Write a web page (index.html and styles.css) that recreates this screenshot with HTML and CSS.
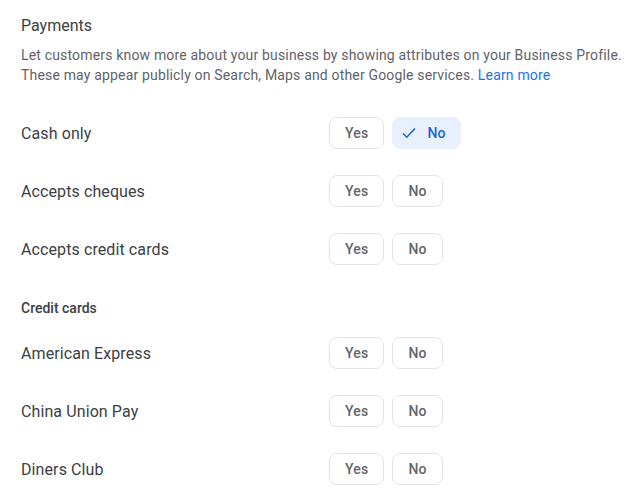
FILE: index.html
```html
<!DOCTYPE html>
<html lang="en">
<head>
    <meta charset="UTF-8">
    <title>Payments</title>
    <link rel="stylesheet" href="styles.css">
</head>
<body>
    <section class="attributes">
        <h2 class="section-title">Payments</h2>
        <p class="section-desc">Let customers know more about your business by showing attributes on your Business Profile. These may appear publicly on Search, Maps and other Google services. <a href="#">Learn more</a></p>

        <div class="attr-list">
            <div class="attr-row">
                <span class="attr-label">Cash only</span>
                <div class="choice">
                    <button class="choice-btn">Yes</button>
                    <button class="choice-btn selected">
                        <svg width="14" height="12" viewBox="0 0 14 12"><polyline points="1,6.5 4.8,10.2 13,1.5" fill="none" stroke="currentColor" stroke-width="1.6"/></svg>
                        No
                    </button>
                </div>
            </div>
            <div class="attr-row">
                <span class="attr-label">Accepts cheques</span>
                <div class="choice">
                    <button class="choice-btn">Yes</button>
                    <button class="choice-btn">No</button>
                </div>
            </div>
            <div class="attr-row">
                <span class="attr-label">Accepts credit cards</span>
                <div class="choice">
                    <button class="choice-btn">Yes</button>
                    <button class="choice-btn">No</button>
                </div>
            </div>
        </div>

        <h3 class="group-title">Credit cards</h3>

        <div class="attr-list">
            <div class="attr-row">
                <span class="attr-label">American Express</span>
                <div class="choice">
                    <button class="choice-btn">Yes</button>
                    <button class="choice-btn">No</button>
                </div>
            </div>
            <div class="attr-row">
                <span class="attr-label">China Union Pay</span>
                <div class="choice">
                    <button class="choice-btn">Yes</button>
                    <button class="choice-btn">No</button>
                </div>
            </div>
            <div class="attr-row">
                <span class="attr-label">Diners Club</span>
                <div class="choice">
                    <button class="choice-btn">Yes</button>
                    <button class="choice-btn">No</button>
                </div>
            </div>
        </div>
    </section>
</body>
</html>
```

FILE: styles.css
```css
body {
    margin: 0;
    font-family: Roboto, "Liberation Sans", Arial, sans-serif;
    background-color: #fff;
    color: #3c4043;
}
.attributes {
    padding: 14px 12px 0 21px;
}
.section-title {
    margin: 0;
    font-size: 16px;
    font-weight: 400;
    line-height: 24px;
    color: #3c4043;
}
.section-desc {
    margin: 7px 0 0;
    font-size: 14px;
    line-height: 20px;
    letter-spacing: 0.17px;
    color: #5f6368;
}
.section-desc a {
    color: #1a73e8;
    text-decoration: none;
}
.attr-list {
    display: flex;
    flex-direction: column;
    gap: 26px;
    margin-top: 32px;
}
.group-title + .attr-list {
    margin-top: 19px;
}
.attr-row {
    display: flex;
    align-items: center;
    height: 32px;
}
.attr-label {
    width: 308px;
    font-size: 16px;
    letter-spacing: 0.1px;
    color: #3c4043;
}
.choice {
    display: flex;
    gap: 8px;
}
.choice-btn {
    display: flex;
    align-items: center;
    height: 32px;
    padding: 0 15px;
    border: 1px solid #e3e3e3;
    border-radius: 8px;
    background-color: #fff;
    font-family: inherit;
    font-size: 14px;
    font-weight: 500;
    letter-spacing: 0.2px;
    color: #63666a;
    cursor: pointer;
}
.choice-btn.selected {
    padding: 0 14px 0 9px;
    border-color: #e8f0fe;
    background-color: #e8f0fe;
    color: #1967d2;
}
.choice-btn svg {
    margin-right: 11px;
}
.group-title {
    margin: 33px 0 0;
    font-size: 14px;
    font-weight: 500;
    line-height: 20px;
    color: #3c4043;
}
```
